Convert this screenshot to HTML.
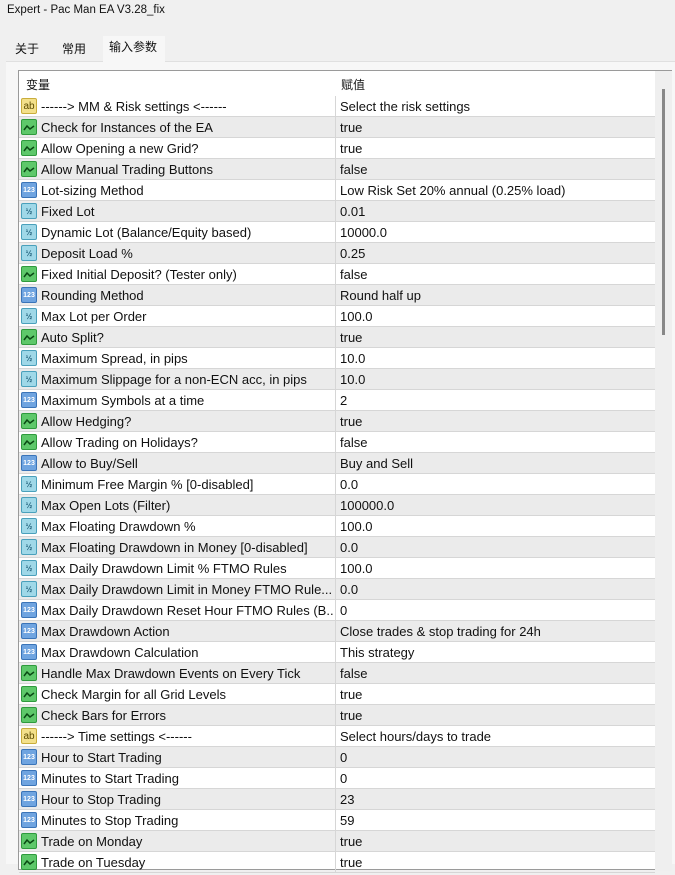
<!DOCTYPE html>
<html><head><meta charset="utf-8"><style>
*{margin:0;padding:0;box-sizing:border-box}
body{width:675px;height:864px;overflow:hidden;background:#f0f0f0;font-family:"Liberation Sans","Noto Sans CJK SC",sans-serif;font-size:13px;color:#111;position:relative}
.title{position:absolute;left:7px;top:4px;font-size:11.5px}
.tab{position:absolute;top:38px;height:24px;font-size:12px;line-height:22px;padding:0 10px}
.panel{position:absolute;left:6px;top:61px;width:669px;height:803px;background:#f7f7f7;border-top:1px solid #e0e0e0}
.box{position:absolute;left:18px;top:70px;width:654px;height:800px;background:#fff;border:1px solid #9a9a9a}
.hdr{position:absolute;left:0;top:0;width:636px;height:25px;background:#fff}
.hdr span{position:absolute;top:5px;font-size:12px}
.row{position:absolute;left:0;width:636px;height:21px;border-bottom:1px solid #d6d6d6}
.row.g{background:#ebebeb}
.row .n{position:absolute;left:22px;top:3px;white-space:nowrap;width:292px;overflow:hidden}
.row .v{position:absolute;left:321px;top:3px;white-space:nowrap}
.row .d{position:absolute;left:316px;top:0;width:1px;height:21px;background:#d6d6d6}
.ic{position:absolute;left:2px;top:2px;width:16px;height:16px;border-radius:2px;font-size:8px;line-height:16px;text-align:center;font-weight:bold}
.ab{background:#f3e08a;border:1px solid #c9ad3c;color:#5a4a00;font-size:10px;font-weight:normal}
.b{background:#5ec86a;border:1px solid #2f9a3d}
.i{background:#6fa4e0;border:1px solid #3a74b8;color:#fff;font-size:7px}
.f{background:#9fd8e8;border:1px solid #4aa0bb;color:#205f7a;font-size:8px}
.sb{position:absolute;left:636px;top:0;width:17px;height:800px;background:#efefef}
.th{position:absolute;left:643px;top:18px;width:3px;height:246px;background:#888}
</style></head><body>
<div class="title">Expert - Pac Man EA V3.28_fix</div>
<div class="tab" style="left:5px">关于</div>
<div class="tab" style="left:52px">常用</div>
<div class="panel"></div>
<div class="tab" style="left:103px;top:36px;height:26px;background:#f7f7f7;width:62px;padding:0 6px;line-height:22px">输入参数</div>
<div class="box">
<div class="hdr"><span style="left:7px">变量</span><span style="left:322px">赋值</span></div>
<div id="rows"></div>
<div class="sb"></div><div class="th"></div>
</div>
<script>
var R=[["ab","------> MM & Risk settings <------","Select the risk settings"],
["b","Check for Instances of the EA","true"],["b","Allow Opening a new Grid?","true"],["b","Allow Manual Trading Buttons","false"],
["i","Lot-sizing Method","Low Risk Set 20% annual (0.25% load)"],["f","Fixed Lot","0.01"],["f","Dynamic Lot (Balance/Equity based)","10000.0"],
["f","Deposit Load %","0.25"],["b","Fixed Initial Deposit? (Tester only)","false"],["i","Rounding Method","Round half up"],
["f","Max Lot per Order","100.0"],["b","Auto Split?","true"],["f","Maximum Spread, in pips","10.0"],
["f","Maximum Slippage for a non-ECN acc, in pips","10.0"],["i","Maximum Symbols at a time","2"],["b","Allow Hedging?","true"],
["b","Allow Trading on Holidays?","false"],["i","Allow to Buy/Sell","Buy and Sell"],["f","Minimum Free Margin % [0-disabled]","0.0"],
["f","Max Open Lots (Filter)","100000.0"],["f","Max Floating Drawdown %","100.0"],["f","Max Floating Drawdown in Money [0-disabled]","0.0"],
["f","Max Daily Drawdown Limit % FTMO Rules","100.0"],["f","Max Daily Drawdown Limit in Money FTMO Rule...","0.0"],
["i","Max Daily Drawdown Reset Hour FTMO Rules (B...","0"],["i","Max Drawdown Action","Close trades & stop trading for 24h"],
["i","Max Drawdown Calculation","This strategy"],["b","Handle Max Drawdown Events on Every Tick","false"],
["b","Check Margin for all Grid Levels","true"],["b","Check Bars for Errors","true"],["ab","------> Time settings <------","Select hours/days to trade"],
["i","Hour to Start Trading","0"],["i","Minutes to Start Trading","0"],["i","Hour to Stop Trading","23"],["i","Minutes to Stop Trading","59"],
["b","Trade on Monday","true"],["b","Trade on Tuesday","true"]];
var h="";
var gl='<svg width="14" height="14" viewBox="0 0 14 14"><path d="M2 10 L5 6 L8 9 L12 6" stroke="#0a4a14" stroke-width="1.5" fill="none"/></svg>';
R.forEach(function(r,k){
var t=r[0]=="ab"?"ab":r[0]=="i"?"123":r[0]=="f"?"½":gl;
h+='<div class="row'+(k%2?' g':'')+'" style="top:'+(25+21*k)+'px"><div class="ic '+r[0]+'">'+t+'</div><span class="n">'+r[1].replace(/&/g,"&amp;").replace(/</g,"&lt;").replace(/>/g,"&gt;")+'</span><div class="d"></div><span class="v">'+r[2].replace(/&/g,"&amp;")+'</span></div>';
});
document.getElementById("rows").innerHTML=h;
</script>
</body></html>
